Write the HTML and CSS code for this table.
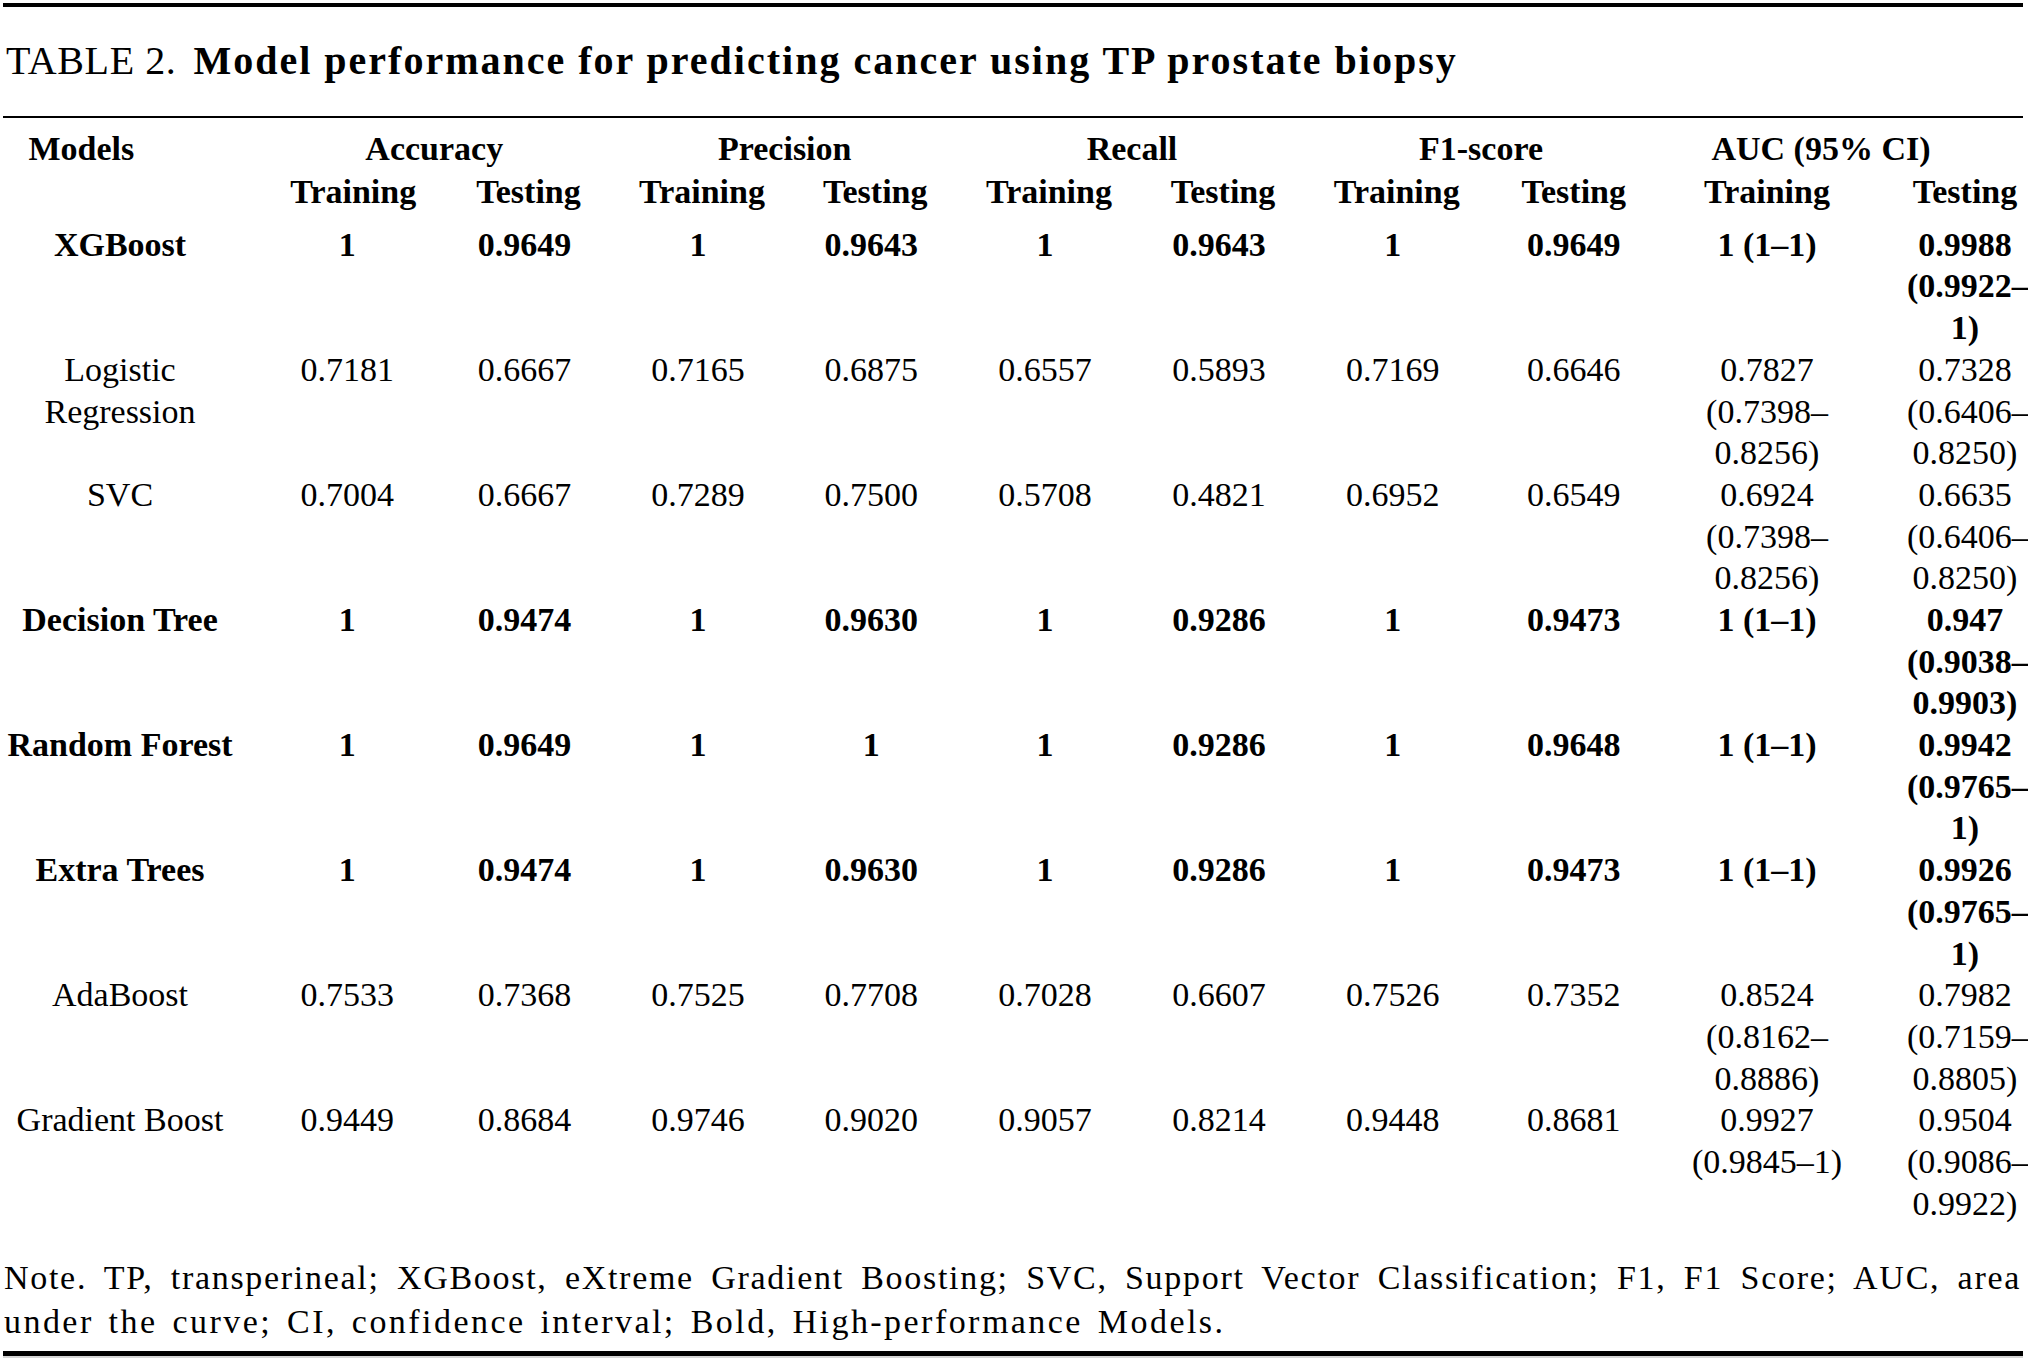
FILE: index.html
```html
<!DOCTYPE html>
<html lang="en">
<head>
<meta charset="utf-8">
<title>Table 2</title>
<link rel="stylesheet" href="styles.css">
</head>
<body>
<div class="page">
  <div class="rule rule-top"></div>
  <div class="title"><span class="label">TABLE 2.</span><span class="caption">Model performance for predicting cancer using TP prostate biopsy</span></div>
  <div class="rule rule-mid"></div>

  <div class="thead">
    <div class="row head-1">
      <div class="cell models-head">Models</div>
      <div class="cell group g-acc">Accuracy</div>
      <div class="cell group g-prec">Precision</div>
      <div class="cell group g-rec">Recall</div>
      <div class="cell group g-f1">F1-score</div>
      <div class="cell group g-auc">AUC (95% CI)</div>
    </div>
    <div class="row head-2">
      <div class="cell"></div>
      <div class="cell">Training</div><div class="cell">Testing</div>
      <div class="cell">Training</div><div class="cell">Testing</div>
      <div class="cell">Training</div><div class="cell">Testing</div>
      <div class="cell">Training</div><div class="cell">Testing</div>
      <div class="cell">Training</div><div class="cell">Testing</div>
    </div>
  </div>

  <div class="tbody">
    <div class="row body-row strong">
      <div class="cell">XGBoost</div>
      <div class="cell">1</div><div class="cell">0.9649</div>
      <div class="cell">1</div><div class="cell">0.9643</div>
      <div class="cell">1</div><div class="cell">0.9643</div>
      <div class="cell">1</div><div class="cell">0.9649</div>
      <div class="cell">1 (1–1)</div><div class="cell">0.9988<br>(0.9922–<br>1)</div>
    </div>
    <div class="row body-row">
      <div class="cell">Logistic<br>Regression</div>
      <div class="cell">0.7181</div><div class="cell">0.6667</div>
      <div class="cell">0.7165</div><div class="cell">0.6875</div>
      <div class="cell">0.6557</div><div class="cell">0.5893</div>
      <div class="cell">0.7169</div><div class="cell">0.6646</div>
      <div class="cell">0.7827<br>(0.7398–<br>0.8256)</div><div class="cell">0.7328<br>(0.6406–<br>0.8250)</div>
    </div>
    <div class="row body-row">
      <div class="cell">SVC</div>
      <div class="cell">0.7004</div><div class="cell">0.6667</div>
      <div class="cell">0.7289</div><div class="cell">0.7500</div>
      <div class="cell">0.5708</div><div class="cell">0.4821</div>
      <div class="cell">0.6952</div><div class="cell">0.6549</div>
      <div class="cell">0.6924<br>(0.7398–<br>0.8256)</div><div class="cell">0.6635<br>(0.6406–<br>0.8250)</div>
    </div>
    <div class="row body-row strong">
      <div class="cell">Decision Tree</div>
      <div class="cell">1</div><div class="cell">0.9474</div>
      <div class="cell">1</div><div class="cell">0.9630</div>
      <div class="cell">1</div><div class="cell">0.9286</div>
      <div class="cell">1</div><div class="cell">0.9473</div>
      <div class="cell">1 (1–1)</div><div class="cell">0.947<br>(0.9038–<br>0.9903)</div>
    </div>
    <div class="row body-row strong">
      <div class="cell">Random Forest</div>
      <div class="cell">1</div><div class="cell">0.9649</div>
      <div class="cell">1</div><div class="cell">1</div>
      <div class="cell">1</div><div class="cell">0.9286</div>
      <div class="cell">1</div><div class="cell">0.9648</div>
      <div class="cell">1 (1–1)</div><div class="cell">0.9942<br>(0.9765–<br>1)</div>
    </div>
    <div class="row body-row strong">
      <div class="cell">Extra Trees</div>
      <div class="cell">1</div><div class="cell">0.9474</div>
      <div class="cell">1</div><div class="cell">0.9630</div>
      <div class="cell">1</div><div class="cell">0.9286</div>
      <div class="cell">1</div><div class="cell">0.9473</div>
      <div class="cell">1 (1–1)</div><div class="cell">0.9926<br>(0.9765–<br>1)</div>
    </div>
    <div class="row body-row">
      <div class="cell">AdaBoost</div>
      <div class="cell">0.7533</div><div class="cell">0.7368</div>
      <div class="cell">0.7525</div><div class="cell">0.7708</div>
      <div class="cell">0.7028</div><div class="cell">0.6607</div>
      <div class="cell">0.7526</div><div class="cell">0.7352</div>
      <div class="cell">0.8524<br>(0.8162–<br>0.8886)</div><div class="cell">0.7982<br>(0.7159–<br>0.8805)</div>
    </div>
    <div class="row body-row">
      <div class="cell">Gradient Boost</div>
      <div class="cell">0.9449</div><div class="cell">0.8684</div>
      <div class="cell">0.9746</div><div class="cell">0.9020</div>
      <div class="cell">0.9057</div><div class="cell">0.8214</div>
      <div class="cell">0.9448</div><div class="cell">0.8681</div>
      <div class="cell">0.9927<br>(0.9845–1)</div><div class="cell">0.9504<br>(0.9086–<br>0.9922)</div>
    </div>
  </div>

  <div class="note">
    <div class="note-line first">Note. TP, transperineal; XGBoost, eXtreme Gradient Boosting; SVC, Support Vector Classification; F1, F1 Score; AUC, area</div>
    <div class="note-line second">under the curve; CI, confidence interval; Bold, High-performance Models.</div>
  </div>
  <div class="rule rule-bottom"></div>
</div>
</body>
</html>
```

FILE: styles.css
```css
html, body {
  margin: 0;
  padding: 0;
  background: #ffffff;
  overflow: hidden;
}

body {
  font-family: "Liberation Serif", "Times New Roman", serif;
  color: #000000;
}

.page {
  width: 2020px;
  margin-left: 3px;
}

.rule {
  background: #000000;
}

.rule-top {
  margin-top: 3px;
  height: 4px;
}

.rule-mid {
  margin-top: 31px;
  height: 2px;
}

.rule-bottom {
  margin-top: 7px;
  height: 5px;
  border-bottom: 2px solid #d4d4d4;
}

.title {
  margin-top: 30px;
  height: 48px;
  font-size: 40px;
  line-height: 48px;
  white-space: nowrap;
  padding-left: 3px;
}

.title .label {
  font-weight: normal;
  letter-spacing: 0.6px;
}

.title .caption {
  font-weight: bold;
  letter-spacing: 2px;
  margin-left: 17px;
}

.row {
  display: grid;
  grid-template-columns: 240px 194.5px 174px 173px 173.5px 174px 174px 173.5px 188.5px 198px 157px;
  font-size: 34px;
  white-space: nowrap;
}

.cell {
  text-align: center;
}

.row > .cell:nth-child(1) {
  padding-right: 6px;
}

.row > .cell:nth-child(2) {
  padding-left: 14px;
}

.body-row > .cell:nth-child(11),
.head-2 > .cell:nth-child(11) {
  padding-left: 41px;
}

.thead {
  margin-top: 10px;
  padding-bottom: 10.3px;
}

.thead .row {
  line-height: 42.7px;
  font-weight: bold;
}

.head-1 .models-head {
  text-align: left;
  padding-left: 25.5px;
}

.head-1 .group {
  grid-column: span 2;
}

.head-1 .g-acc {
  padding-left: 14px;
}

.head-1 .g-f1 {
  padding-right: 12px;
}

.head-1 .g-auc {
  padding-right: 49px;
}

.head-2 > .cell:nth-child(2) {
  padding-left: 26px;
}

.head-2 > .cell:nth-child(3),
.head-2 > .cell:nth-child(4),
.head-2 > .cell:nth-child(5),
.head-2 > .cell:nth-child(6),
.head-2 > .cell:nth-child(7),
.head-2 > .cell:nth-child(8) {
  padding-left: 8px;
}

.body-row {
  height: 125.1px;
  line-height: 41.7px;
}

.body-row.strong {
  font-weight: bold;
}

.note {
  margin-top: 31.5px;
  font-size: 34px;
  line-height: 44px;
  padding-left: 1px;
  padding-right: 2px;
}

.note-line {
  white-space: nowrap;
  height: 44px;
}

.note-line.first {
  letter-spacing: 1.7px;
  text-align: justify;
  text-align-last: justify;
}

.note-line.second {
  letter-spacing: 2.45px;
  word-spacing: 4px;
}
```
